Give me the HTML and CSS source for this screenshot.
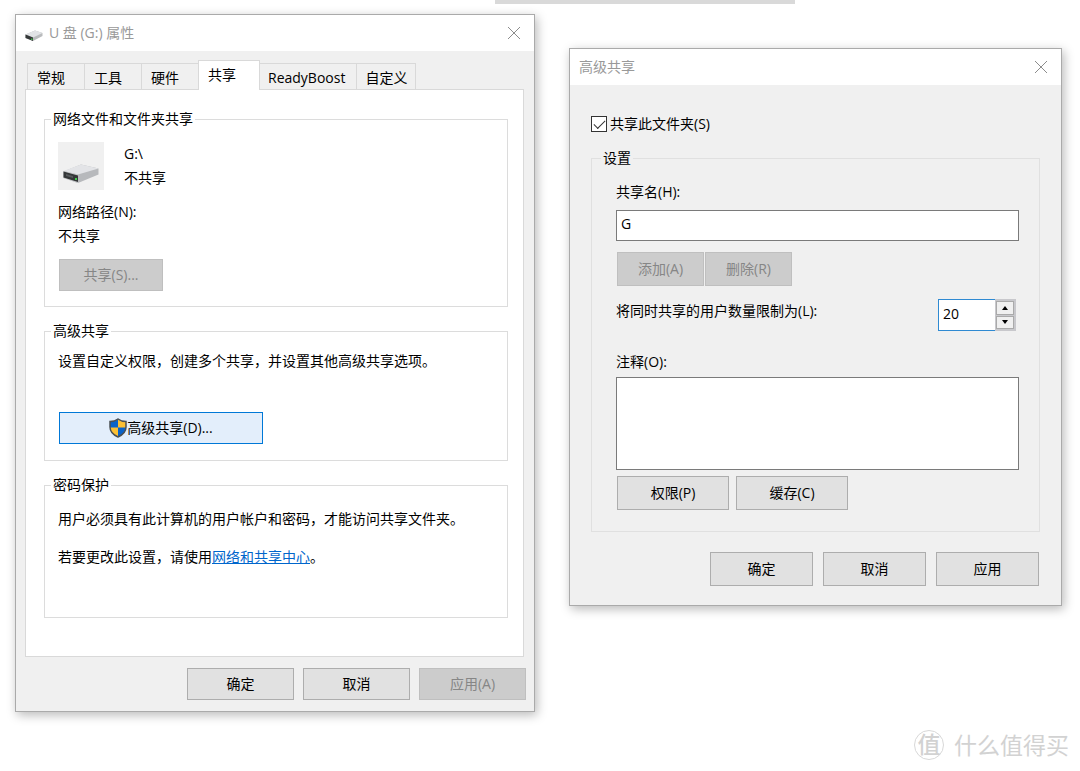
FILE: index.html
```html
<!DOCTYPE html>
<html lang="zh-CN">
<head>
<meta charset="utf-8">
<title>U 盘 (G:) 属性</title>
<link rel="stylesheet" href="styles.css">
</head>
<body>
<div class="strip"></div>
<main class="desktop">
  <section class="window" aria-label="U 盘 (G:) 属性">
    <header class="titlebar">
      <svg class="title-icon" width="18" height="14" viewBox="0 0 36 28" aria-hidden="true">
        <path d="M1 13 20 5 35 10 35 16 16 26 1 20Z" fill="#b9bbbd"/>
        <path d="M1 13 20 5 35 10 16 19Z" fill="#e1e3e6"/>
        <path d="M1 13 16 19 16 26 1 20Z" fill="#353839"/>
        <path d="M12 21h3v3h-3z" fill="#42b94a"/>
      </svg>
      <h1 class="title">U 盘 (G:) 属性</h1>
      <button class="close" type="button" aria-label="关闭"><svg width="12" height="12" viewBox="0 0 12 12"><path d="M0 0 12 12M12 0 0 12" stroke="#8c8c8c" fill="none"/></svg></button>
    </header>
    <div class="props">
      <div class="tabs" role="tablist">
        <button class="tab" type="button" role="tab">常规</button>
        <button class="tab" type="button" role="tab">工具</button>
        <button class="tab" type="button" role="tab">硬件</button>
        <button class="tab active" type="button" role="tab" aria-selected="true">共享</button>
        <button class="tab snug" type="button" role="tab">ReadyBoost</button>
        <button class="tab snug" type="button" role="tab">自定义</button>
      </div>
      <div class="panel" role="tabpanel">
        <fieldset class="group network">
          <legend>网络文件和文件夹共享</legend>
          <div class="drive">
            <div class="drive-box">
              <svg width="36" height="20" viewBox="0 0 72 40" aria-hidden="true">
                <path d="M1 15 36 1 71 9 71 21 30 38 1 28Z" fill="#b7b9bc"/>
                <path d="M1 14 36 1 71 9 30 21Z" fill="#e3e4e7"/>
                <path d="M1 14 30 21 30 38 1 28Z" fill="#c9cbcd"/>
                <path d="M1 15 30 23 30 36 1 27Z" fill="#343738"/>
                <path d="M6 20 20 24 20 28 6 24Z" fill="#55595b"/>
                <path d="M24 28h4v4h-4z" fill="#3fd14a"/>
              </svg>
            </div>
            <div>
              <p>G:\</p>
              <p>不共享</p>
            </div>
          </div>
          <p class="path">网络路径(N):</p>
          <p>不共享</p>
          <button class="btn share" type="button" disabled>共享(S)...</button>
        </fieldset>
        <fieldset class="group advanced">
          <legend>高级共享</legend>
          <p>设置自定义权限，创建多个共享，并设置其他高级共享选项。</p>
          <button class="btn primary" type="button">
            <svg width="18" height="20" viewBox="0 0 36 40" aria-hidden="true">
              <path d="M18 2C13 6 8 7 2 7V18C2 28 9 34 18 38Z" fill="#0a63c9"/>
              <path d="M18 2C23 6 28 7 34 7V18C34 28 27 34 18 38Z" fill="#fcc034"/>
              <path d="M2 19H18V38C9 34 3 28 2 19Z" fill="#fcc034"/>
              <path d="M34 19H18V38C27 34 33 28 34 19Z" fill="#0a63c9"/>
              <path d="M18 2C23 6 28 7 34 7V18C34 28 27 34 18 38C9 34 2 28 2 18V7C8 7 13 6 18 2Z" fill="none" stroke="#4b5054" stroke-width="3"/>
            </svg>高级共享(D)...</button>
        </fieldset>
        <fieldset class="group password">
          <legend>密码保护</legend>
          <p>用户必须具有此计算机的用户帐户和密码，才能访问共享文件夹。</p>
          <p class="change">若要更改此设置，请使用<a href="#">网络和共享中心</a>。</p>
        </fieldset>
      </div>
      <footer class="actions">
        <button class="btn" type="button">确定</button>
        <button class="btn" type="button">取消</button>
        <button class="btn" type="button" disabled>应用(A)</button>
      </footer>
    </div>
  </section>

  <section class="window dialog" aria-label="高级共享">
    <header class="titlebar">
      <h2 class="title">高级共享</h2>
      <button class="close" type="button" aria-label="关闭"><svg width="12" height="12" viewBox="0 0 12 12"><path d="M0 0 12 12M12 0 0 12" stroke="#8c8c8c" fill="none"/></svg></button>
    </header>
    <form class="form">
      <label class="check"><input type="checkbox" checked>共享此文件夹(S)</label>
      <fieldset class="group settings">
        <legend>设置</legend>
        <label for="name">共享名(H):</label>
        <input class="field" id="name" type="text" value="G">
        <div class="pair tight">
          <button class="btn" type="button" disabled>添加(A)</button>
          <button class="btn" type="button" disabled>删除(R)</button>
        </div>
        <div class="limit">
          <label for="limit">将同时共享的用户数量限制为(L):</label>
          <div class="spinner">
            <input id="limit" type="text" inputmode="numeric" value="20">
            <div class="steps">
              <button type="button" aria-label="增加"><svg width="6" height="4" viewBox="0 0 6 4"><path d="M3 0 6 4H0Z"/></svg></button>
              <button type="button" aria-label="减少"><svg width="6" height="4" viewBox="0 0 6 4"><path d="M3 4 6 0H0Z"/></svg></button>
            </div>
          </div>
        </div>
        <label for="note">注释(O):</label>
        <textarea class="field note" id="note"></textarea>
        <div class="pair">
          <button class="btn" type="button">权限(P)</button>
          <button class="btn" type="button">缓存(C)</button>
        </div>
      </fieldset>
      <footer class="actions">
        <button class="btn" type="button">确定</button>
        <button class="btn" type="button">取消</button>
        <button class="btn" type="button">应用</button>
      </footer>
    </form>
  </section>
</main>
<div class="brand"><span class="seal">值</span><span>什么值得买</span></div>
</body>
</html>
```
FILE: styles.css
```css
* { box-sizing: border-box; }

body {
  margin: 0;
  background: #fff;
  color: #000;
  font: 14px/24px "Open Sans", "Noto Sans CJK SC", sans-serif;
}

button, input, textarea { font: inherit; color: inherit; }
p, h1, h2 { margin: 0; }

.strip {
  width: 300px;
  height: 4px;
  margin-left: 495px;
  background: #d9d9d9;
}

.desktop {
  display: grid;
  grid-template-columns: 520fr 493fr;
  gap: 34px;
  align-items: start;
  padding: 10px 18px 0 15px;
}

.window {
  background: #f0f0f0;
  border: 1px solid #aaa;
  box-shadow: 2px 3px 10px rgba(0, 0, 0, 0.28);
}

.dialog { margin-top: 34px; }

.titlebar {
  display: flex;
  align-items: center;
  height: 36px;
  padding: 0 14px 0 9px;
  background: #fff;
  color: #999;
}

.title-icon { margin: 4px 6px 0 0; }
.title { flex: 1; font-size: 14px; font-weight: 400; }

.close {
  display: flex;
  padding: 0;
  border: 0;
  background: none;
}

.props { padding: 9px 8px 11px 9px; }

.tabs {
  display: flex;
  align-items: flex-end;
  height: 29px;
  padding-left: 2px;
}

.tab {
  height: 26px;
  padding: 2px 19px 0 9px;
  border: 1px solid #d9d9d9;
  border-width: 1px 0 0 1px;
  background: #f0f0f0;
  line-height: 22px;
  text-align: left;
}

.tab.active {
  position: relative;
  height: 30px;
  margin-bottom: -1px;
  padding: 0 23px 2px 9px;
  border-right-width: 1px;
  background: #fff;
}

.tab.snug { padding: 2px 8px 0; }
.tab.active + .tab { padding: 2px 11px 0 8px; border-left: 0; }
.tab:last-child { border-right-width: 1px; }

.panel {
  display: grid;
  gap: 14px;
  margin-right: 2px;
  padding: 19px 15px 38px 18px;
  border: 1px solid #d9d9d9;
  background: #fff;
}

.group {
  min-width: 0;
  margin: 0;
  padding: 0 14px;
  border: 1px solid #dcdcdc;
}

.group legend { padding: 0 2px; margin-left: -8px; line-height: 20px; }

.network { padding: 13px 13px 15px; }
.advanced { padding: 8px 13px 16px; }
.password { padding: 12px 13px 48px; }
.network legend, .advanced legend, .password legend { margin-left: -7px; }

.drive { display: flex; gap: 20px; }

.drive-box {
  display: flex;
  align-items: flex-end;
  justify-content: center;
  width: 46px;
  height: 48px;
  padding-bottom: 6px;
  background: #f0f0f0;
}

.path { margin-top: 10px; }
.change { margin-top: 14px; }
a { color: #0066cc; }

.btn {
  height: 32px;
  padding: 0;
  border: 1px solid #adadad;
  background: #e1e1e1;
}

.btn:disabled {
  border-color: #bfbfbf;
  background: #ccc;
  color: #868686;
}

.share { display: block; width: 104px; margin: 11px 0 0 1px; }

.primary {
  display: flex;
  align-items: center;
  justify-content: center;
  width: 204px;
  margin: 39px 0 0 1px;
  border-color: #0078d7;
  background: #e3eefb;
}

.actions {
  display: flex;
  justify-content: flex-end;
  gap: 9px;
  margin-top: 11px;
}

.actions .btn { width: 107px; }

.form { padding: 27px 21px 19px; }

.check { display: flex; align-items: center; gap: 3px; }

.check input {
  appearance: none;
  width: 16px;
  height: 16px;
  margin: 0;
  border: 1px solid #333;
  background: #fff;
}

.check input:checked::before {
  content: "";
  display: block;
  width: 10px;
  height: 5px;
  margin: 3px 2px;
  border: solid #333;
  border-width: 0 0 1px 1px;
  transform: rotate(-45deg);
}

.settings {
  margin-top: 12px;
  padding: 12px 20px 21px 24px;
  border-color: #e0e0e0;
}

.settings legend { margin-left: -15px; }
.settings label { display: block; }

.field {
  display: block;
  width: 100%;
  height: 31px;
  margin-top: 6px;
  padding: 0 4px 4px;
  border: 1px solid #7a7a7a;
  border-radius: 0;
  background: #fff;
}

.note { height: 93px; margin-top: 3px; resize: none; }

.pair { display: flex; gap: 7px; margin: 6px 0 0 1px; }
.pair .btn { width: 112px; height: 34px; }
.tight { gap: 1px; margin-top: 11px; }
.tight .btn { width: 87px; }

.limit {
  display: flex;
  justify-content: space-between;
  margin: 13px 3px 19px 0;
}

.spinner {
  display: flex;
  width: 78px;
  height: 32px;
  background: #c8c8cc;
}

.spinner input {
  flex: 1;
  min-width: 0;
  padding: 0 4px 3px;
  border: 1px solid #2f8ad2;
  border-right: 0;
  border-radius: 0;
  background: #fff;
}

.steps {
  display: grid;
  gap: 1px;
  width: 21px;
  padding: 2px 2px 2px 1px;
}

.steps button {
  display: flex;
  align-items: center;
  justify-content: center;
  padding: 0;
  border: 1px solid #aaa;
  background: #f0f0f0;
}

.form .actions { gap: 10px; margin: 20px 1px 0 0; }
.form .actions .btn { width: 103px; height: 34px; }

.brand {
  display: flex;
  align-items: center;
  justify-content: flex-end;
  gap: 10px;
  padding: 18px 11px 0 0;
  color: #d2d2d2;
  font-size: 23px;
  line-height: 30px;
}

.seal {
  width: 30px;
  height: 30px;
  border: 1px solid #d8d8d8;
  border-radius: 50%;
  font-weight: 500;
  line-height: 27px;
  text-align: center;
}
```
